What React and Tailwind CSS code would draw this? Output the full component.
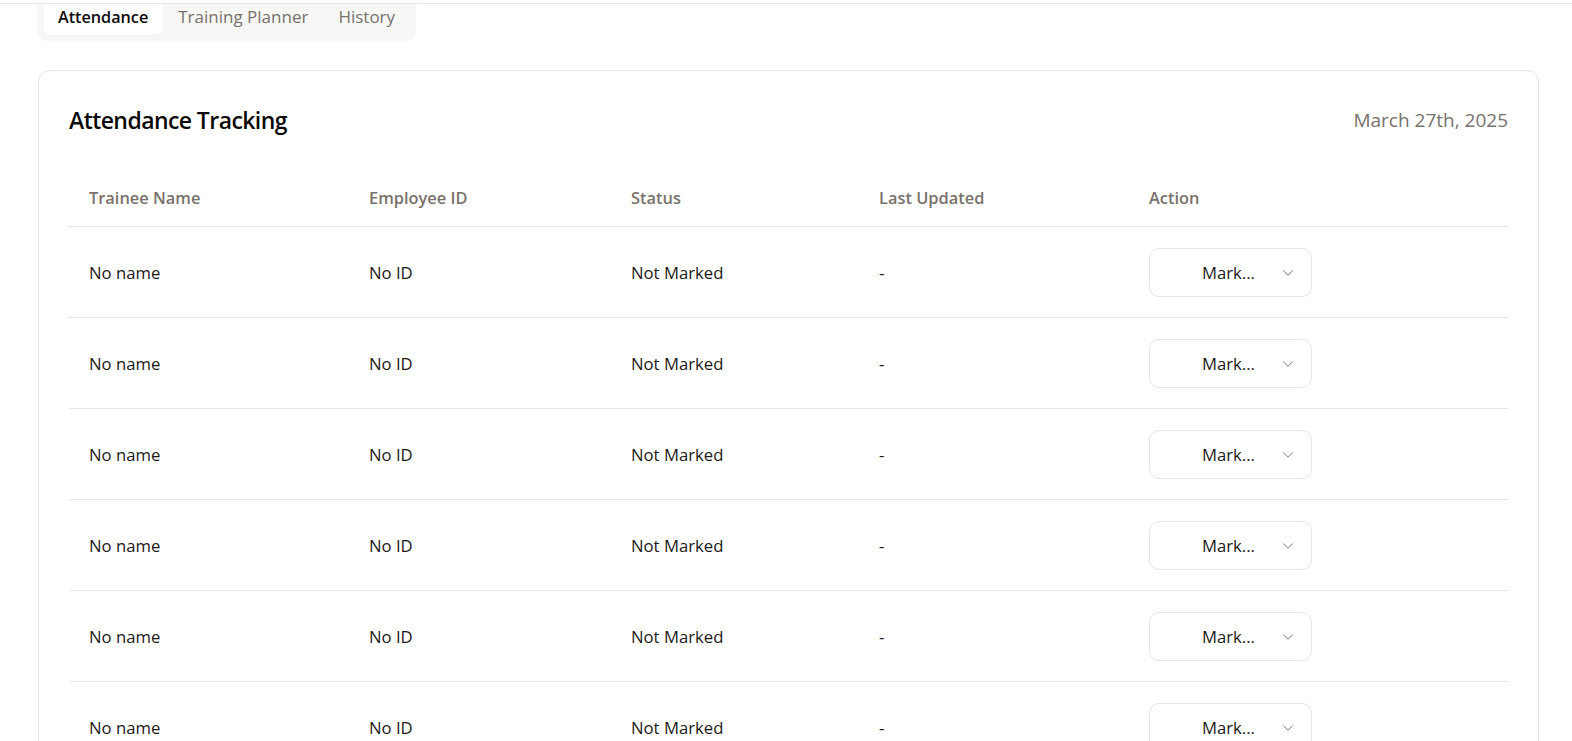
import { ChevronDown } from 'lucide-react';

const rows = Array.from({ length: 6 }, () => ({
  name: 'No name',
  id: 'No ID',
  status: 'Not Marked',
  updated: '-',
}));

const cols = 'grid grid-cols-[280px_262px_248px_270px_379px]';

const App = () => {
  return (
    <div className="min-h-screen bg-white font-['Open_Sans',sans-serif] text-[#1c1917]">
      {/* top bar edge */}
      <div className="relative z-10 h-[4px] border-b border-[#e7e5e4] bg-white"></div>

      {/* Tabs */}
      <div className="-mt-[5px] pl-[37px]">
        <div className="inline-flex items-center rounded-b-xl bg-[#f7f7f6] px-[6px] pb-[6px] shadow-[0_1px_2px_rgba(0,0,0,0.02)]">
          <button className="h-[36px] rounded-b-lg bg-white px-[15px] text-[16.2px] font-semibold text-[#0c0a09] shadow-[0_1px_2px_rgba(0,0,0,0.04)]">
            Attendance
          </button>
          <button className="h-[36px] px-[15px] text-[17px] font-medium text-[#78716c]">Training Planner</button>
          <button className="h-[36px] px-[15px] text-[17px] font-medium text-[#78716c]">History</button>
        </div>
      </div>

      {/* Card */}
      <div className="ml-[38px] mt-[29px] w-[1501px] rounded-xl border border-[#e7e5e4] bg-white px-[30px] pt-[30px]">
        <div className="flex h-[38px] items-center justify-between">
          <h2 className="text-[23px] font-semibold tracking-tight text-[#0c0a09]">Attendance Tracking</h2>
          <span className="text-[19px] text-[#78716c]">March 27th, 2025</span>
        </div>

        <div className="mt-[31px]">
          <div className={`${cols} h-[57px] items-center border-b border-[#e7e5e4] text-[16.4px] font-semibold text-[#78716c]`}>
            <div className="px-5">Trainee Name</div>
            <div className="px-5">Employee ID</div>
            <div className="px-5">Status</div>
            <div className="px-5">Last Updated</div>
            <div className="px-5">Action</div>
          </div>
          {rows.map((r, i) => (
            <div key={i} className={`${cols} h-[91px] items-center border-b border-[#e7e5e4] text-[16.7px]`}>
              <div className="px-5 pt-[2px]">{r.name}</div>
              <div className="px-5 pt-[2px]">{r.id}</div>
              <div className="px-5 pt-[2px]">{r.status}</div>
              <div className="px-5 pt-[2px]">{r.updated}</div>
              <div className="px-5">
                <button className="flex h-[49px] w-[163px] items-center rounded-[10px] border border-[#e7e5e4] bg-white pl-[28px] pr-[14px] pt-[2px] text-[16.7px]">
                  <span className="flex-1 text-center">Mark...</span>
                  <ChevronDown className="h-[18px] w-[18px] text-[#78716c]" strokeWidth={1.3} />
                </button>
              </div>
            </div>
          ))}
        </div>
      </div>
    </div>
  );
};

export default App;
